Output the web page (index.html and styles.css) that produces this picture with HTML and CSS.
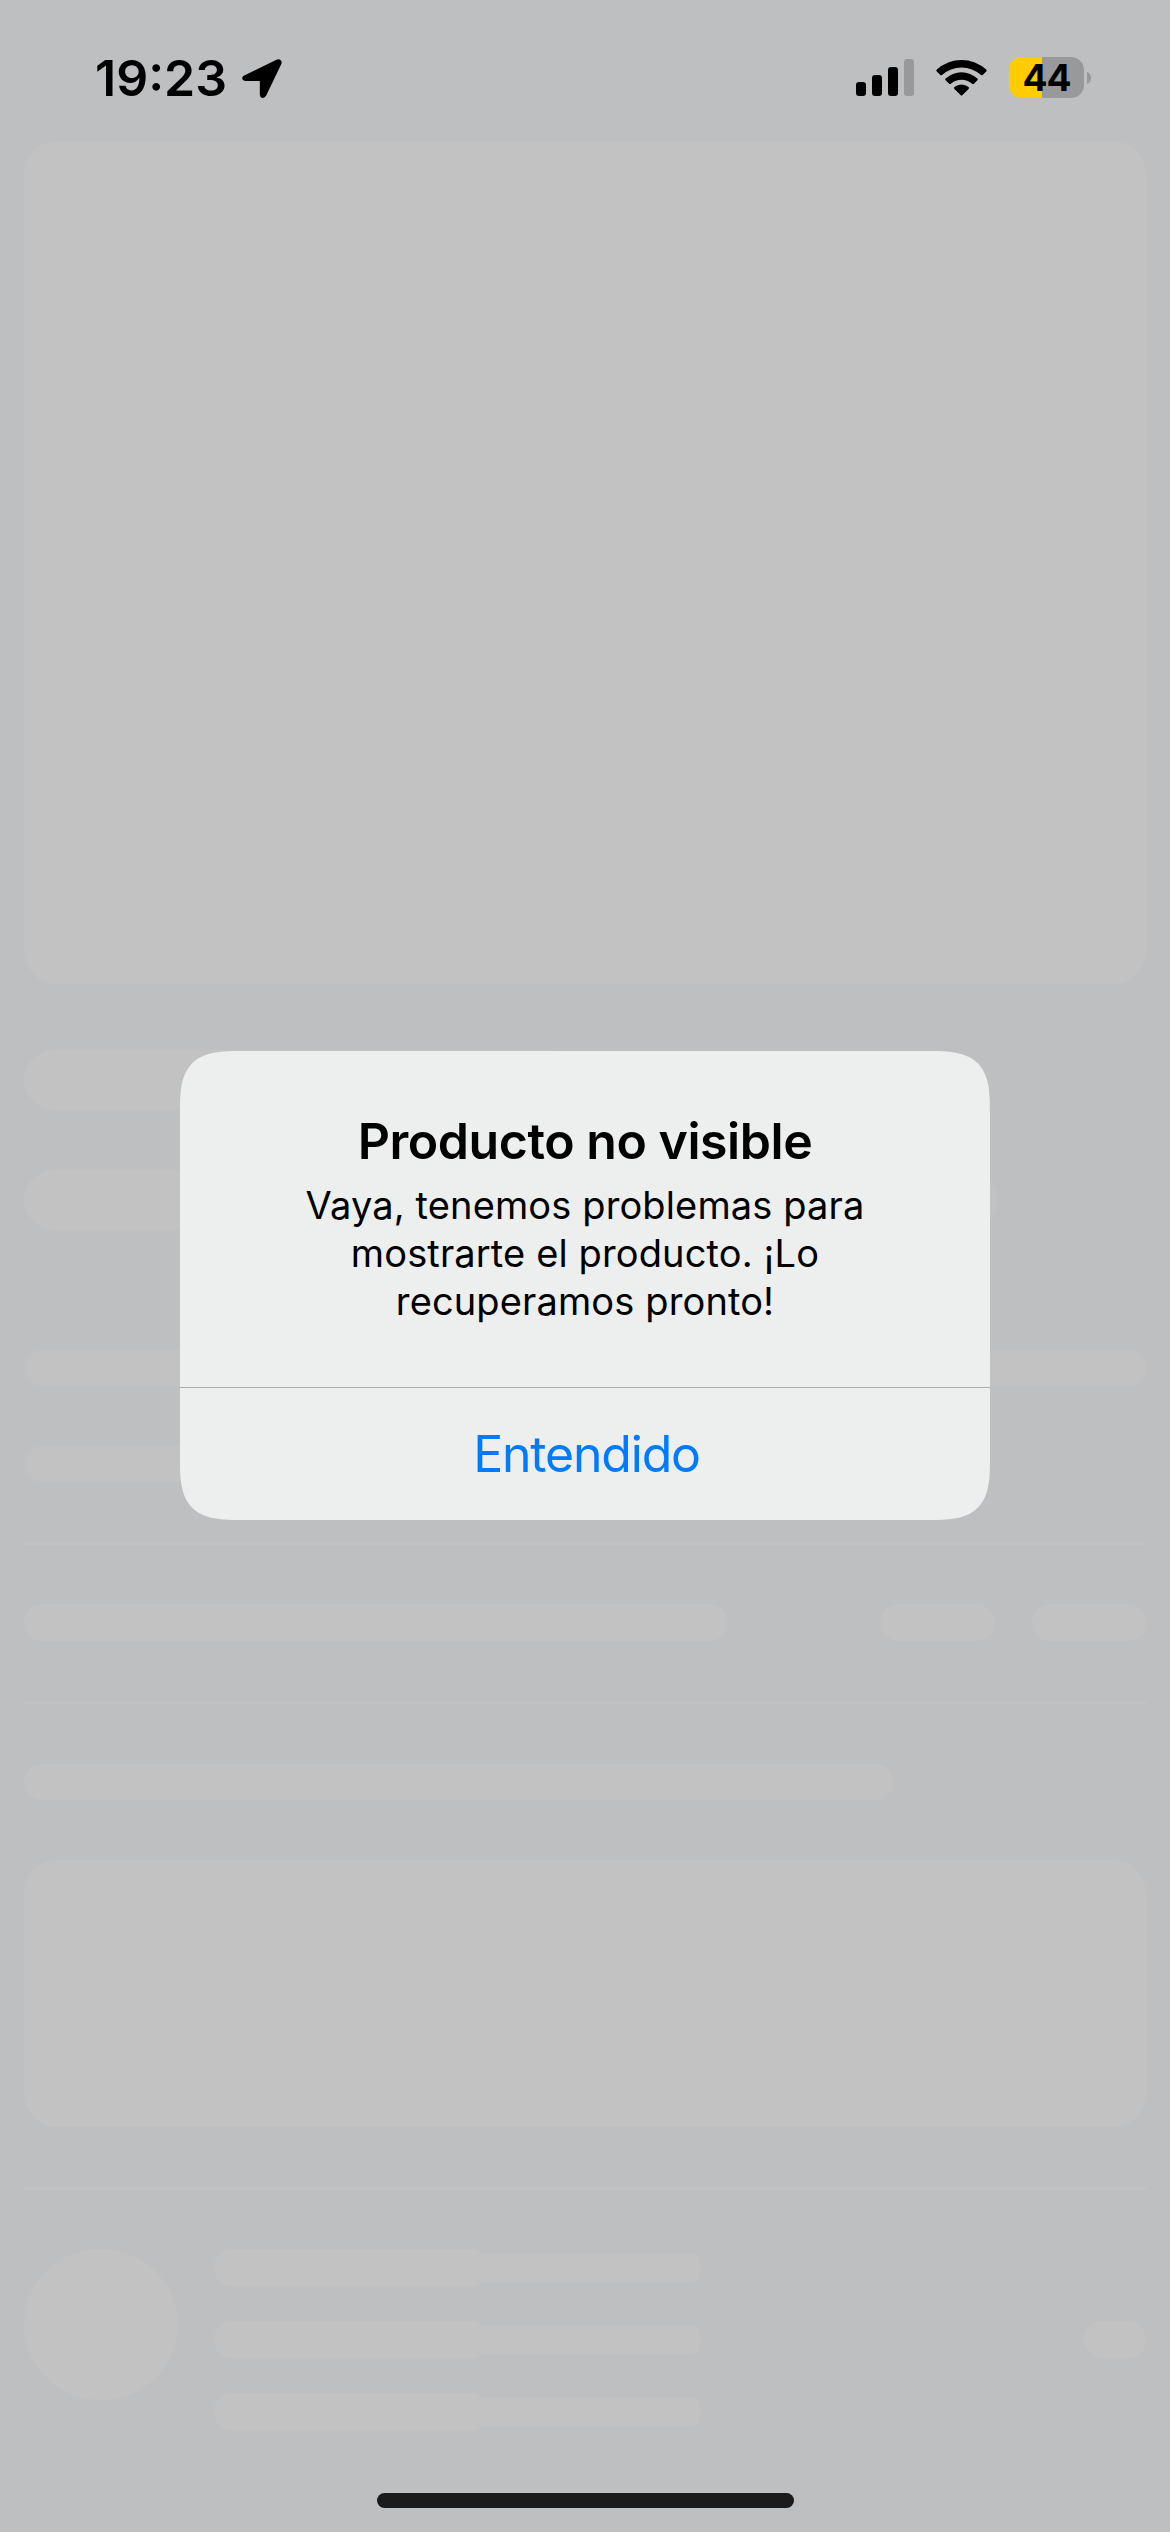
FILE: index.html
```html
<!DOCTYPE html>
<html lang="es">
<head>
<meta charset="utf-8">
<title>Producto</title>
<link rel="stylesheet" href="styles.css">
</head>
<body>
<div class="screen">
  <header class="status">
    <div class="status-left">
      <span class="time">19:23</span>
      <svg class="location" width="40" height="40" viewBox="0 0 40 40"><path d="M3.2 16 L34.5 .7 Q37 -.4 38.8 1.2 Q40.3 2.8 39.2 5.2 L24.2 36.6 Q22.9 39.3 20.3 39 Q17.8 38.5 17.8 35.6 L17.8 22 L3.8 22 Q.6 21.8 .2 19.2 Q0 17.3 3.2 16 Z"/></svg>
    </div>
    <div class="status-right">
      <svg class="signal" width="58" height="38" viewBox="0 0 58 38"><rect x="0" y="23" width="10" height="14" rx="3"/><rect x="16" y="16" width="10" height="21" rx="3"/><rect x="32" y="8" width="10" height="29" rx="3"/><rect class="dim" x="48" y="0" width="10" height="37" rx="3"/></svg>
      <svg class="wifi" width="52" height="38" viewBox="0 0 52 38"><path d="M.8 10.6 Q-.1 11.6 .8 12.5 L4.3 16 Q5.1 16.7 6 15.9 A29.4 29.4 0 0 1 45 15.9 Q45.9 16.7 46.7 16 L50.2 12.5 Q51.1 11.6 50.2 10.6 A36.5 36.5 0 0 0 .8 10.6 Z"/><path d="M9.6 19.4 Q8.8 20.3 9.6 21.2 L13.1 24.7 Q14 25.5 14.9 24.7 A16.4 16.4 0 0 1 36.1 24.7 Q37 25.5 37.9 24.7 L41.4 21.2 Q42.2 20.3 41.4 19.4 A23.8 23.8 0 0 0 9.6 19.4 Z"/><path d="M18.4 28.1 Q17.6 29.1 18.4 29.9 L24.8 36.3 Q25.5 37 26.2 36.3 L32.6 29.9 Q33.4 29.1 32.6 28.1 A11 11 0 0 0 18.4 28.1 Z"/></svg>
      <div class="battery"><span>44</span></div>
      <svg class="nub" width="4" height="12" viewBox="0 0 4 12"><path d="M0 0 Q4 1.5 4 6 Q4 10.5 0 12 Z"/></svg>
    </div>
  </header>

  <main class="skeleton">
    <div class="bone hero"></div>
    <div class="bone title-bar"></div>
    <div class="bone subtitle-bar"></div>
    <div class="bone text-bar first"></div>
    <div class="bone text-bar second"></div>
    <div class="rule rule-a"></div>
    <div class="meta">
      <div class="bone meta-main"></div>
      <div class="bone meta-chip"></div>
      <div class="bone meta-chip"></div>
    </div>
    <div class="rule rule-b"></div>
    <div class="bone heading-bar"></div>
    <div class="bone panel"></div>
    <div class="rule rule-c"></div>
    <div class="seller">
      <div class="bone avatar"></div>
      <div class="lines">
        <div class="line"><div class="bone head"></div><div class="bone tail"></div></div>
        <div class="line"><div class="bone head"></div><div class="bone tail"></div></div>
        <div class="line"><div class="bone head"></div><div class="bone tail"></div></div>
      </div>
      <div class="bone badge"></div>
    </div>
  </main>
  <div class="home-indicator"></div>

  <div class="overlay">
    <section class="alert" role="alertdialog">
      <div class="alert-body">
        <h1>Producto no visible</h1>
        <p>Vaya, tenemos problemas para<br>mostrarte el producto. ¡Lo<br>recuperamos pronto!</p>
      </div>
      <button class="alert-action">Entendido</button>
    </section>
  </div>
</div>
</body>
</html>
```
FILE: styles.css
```css
* { box-sizing: border-box; }
body {
  margin: 0;
  font-family: Inter, "Liberation Sans", sans-serif;
  color: #000;
}
.screen {
  position: relative;
  display: flex;
  flex-direction: column;
  align-items: center;
  width: 1170px;
  height: 2532px;
  overflow: hidden;
  background: #bdbfc1;
}

/* Status bar */
.status {
  display: flex;
  justify-content: space-between;
  align-items: flex-start;
  width: 100%;
  height: 141px;
  flex: none;
  padding: 57px 79px 0 95px;
}
.status-left, .status-right { display: flex; align-items: flex-start; }
.time {
  width: 134px;
  margin-right: 13px;
  font-size: 50px;
  line-height: 42px;
  font-weight: 600;
  letter-spacing: 0;
  white-space: nowrap;
}
.location { margin-top: 2px; }
.signal { margin: 2px 22px 0 0; }
.dim, .nub { fill: #98999b; }
.wifi { margin: 2px 21px 0 0; }
.battery {
  width: 75px;
  height: 41px;
  margin-right: 3px;
  border-radius: 13px;
  background: linear-gradient(90deg, #fc0 33px, #98999b 33px);
  text-align: center;
  font-size: 37px;
  line-height: 41px;
  font-weight: 700;
  letter-spacing: -1px;
}
.nub { margin-top: 15px; }

/* Loading placeholders */
.skeleton {
  display: flex;
  flex-direction: column;
  width: 100%;
  padding: 0 24px;
}
.bone { flex: none; background: #c2c2c2; border-radius: 18px; }
.rule { flex: none; height: 3px; background: #c2c2c2; }
.hero { height: 843px; border-radius: 33px; }
.title-bar { width: 560px; height: 60px; margin-top: 66px; border-radius: 30px; }
.subtitle-bar { width: 974px; height: 60px; margin-top: 60px; border-radius: 30px; }
.text-bar { height: 36px; }
.first { margin-top: 120px; }
.second { width: 700px; margin-top: 60px; }
.rule-a { margin-top: 60px; }
.meta { display: flex; gap: 37px; margin-top: 59px; }
.meta .bone { height: 37px; }
.meta-main { width: 703px; margin-right: auto; }
.meta-chip { width: 114px; }
.rule-b { margin-top: 60px; }
.heading-bar { width: 869px; height: 36px; margin-top: 60px; }
.panel { height: 267px; margin-top: 60px; border-radius: 33px; }
.rule-c { margin-top: 60px; }
.seller { display: flex; align-items: flex-start; height: 181px; margin-top: 59px; }
.avatar { width: 154px; height: 151px; border-radius: 50%; }
.lines { display: flex; flex-direction: column; gap: 35px; margin-left: 36px; }
.line { display: flex; align-items: center; }
.head { width: 265px; height: 37px; border-radius: 18px 4px 4px 18px; }
.tail { width: 221px; height: 30px; border-radius: 0 8px 8px 0 / 0 15px 15px 0; }
.badge { width: 62px; height: 37px; margin: 72px 0 0 auto; }
.home-indicator {
  width: 417px;
  height: 15px;
  margin: auto 0 24px;
  border-radius: 8px;
  background: #1b1b1b;
}

/* Alert */
.overlay {
  position: absolute;
  inset: 0;
  display: flex;
  align-items: flex-start;
  justify-content: center;
  padding-top: 1051px;
}
.alert {
  width: 810px;
  height: 469px;
  overflow: hidden;
  border-radius: 42px;
  background: #edeeee;
  text-align: center;
}
@supports (corner-shape: superellipse(1.7)) {
  .alert { border-radius: 64px; corner-shape: superellipse(1.7); }
}
.alert-body { height: 337px; padding-top: 60px; border-bottom: 1px solid #a9adae; }
.alert h1 {
  margin: 0;
  font-size: 50px;
  line-height: 60px;
  font-weight: 600;
  letter-spacing: -0.45px;
}
.alert p {
  margin: 10px 0 0;
  font-size: 38px;
  line-height: 48px;
  letter-spacing: 0.13px;
}
.alert-action {
  display: block;
  width: 100%;
  height: 132px;
  padding: 0 0 0 3px;
  border: 0;
  background: none;
  color: #007aff;
  font: 400 50px/133px Inter, "Liberation Sans", sans-serif;
  letter-spacing: -1.2px;
}
```
